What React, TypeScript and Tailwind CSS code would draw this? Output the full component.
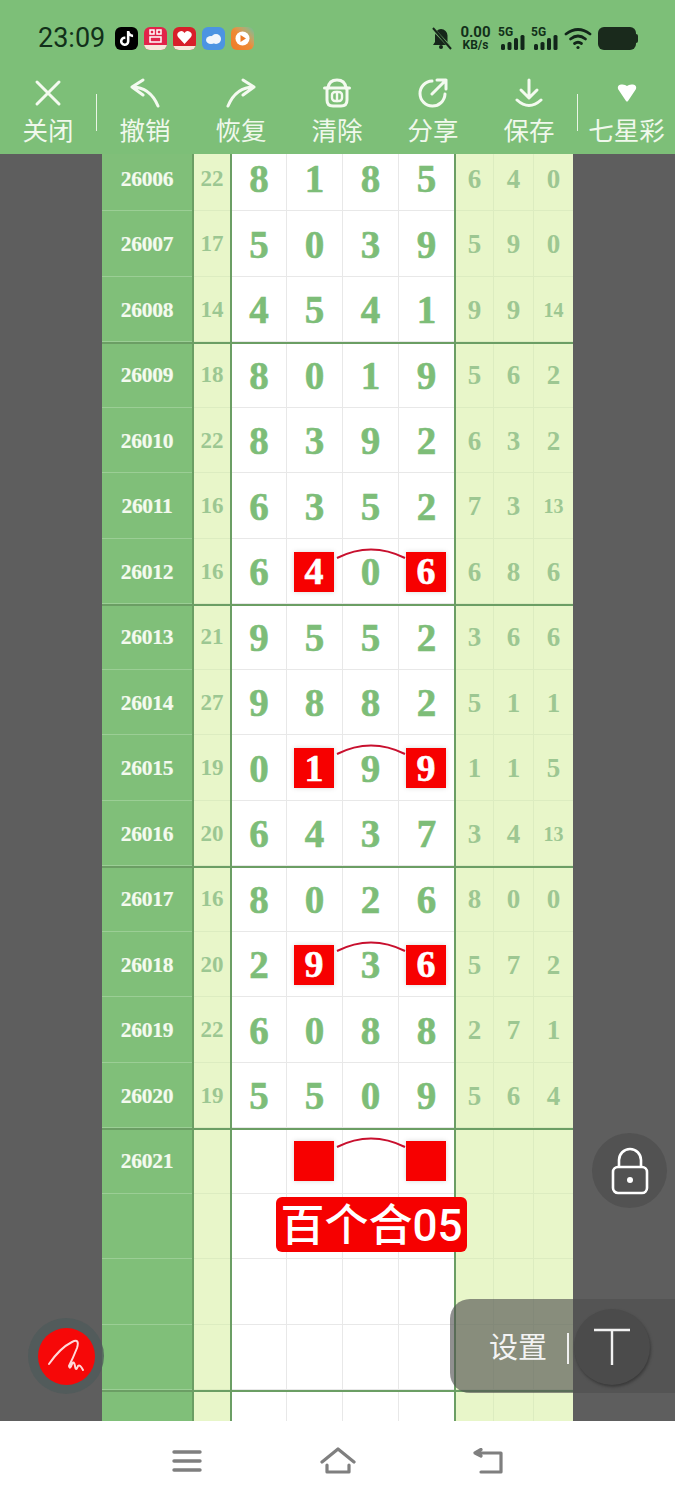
import React from "react";
import { FaTiktok } from "react-icons/fa";

const cjk = "font-['Noto_Sans_CJK_SC','Noto_Sans',sans-serif]";
const serif = "font-['Liberation_Serif',serif]";
const LINE = "bg-[#6b9e64]";

type R = { id: string; sum: string; d: string[]; r: string[]; hl?: boolean };
const mk = (id: string, sum: string, d: string, r: string[], hl?: boolean): R => ({ id, sum, d: d.split(""), r, hl });

const groups: R[][] = [
  [mk("26006", "22", "8185", ["6", "4", "0"]), mk("26007", "17", "5039", ["5", "9", "0"]), mk("26008", "14", "4541", ["9", "9", "14"])],
  [mk("26009", "18", "8019", ["5", "6", "2"]), mk("26010", "22", "8392", ["6", "3", "2"]), mk("26011", "16", "6352", ["7", "3", "13"]), mk("26012", "16", "6406", ["6", "8", "6"], true)],
  [mk("26013", "21", "9552", ["3", "6", "6"]), mk("26014", "27", "9882", ["5", "1", "1"]), mk("26015", "19", "0199", ["1", "1", "5"], true), mk("26016", "20", "6437", ["3", "4", "13"])],
  [mk("26017", "16", "8026", ["8", "0", "0"]), mk("26018", "20", "2936", ["5", "7", "2"], true), mk("26019", "22", "6088", ["2", "7", "1"]), mk("26020", "19", "5509", ["5", "6", "4"])],
  [mk("26021", "", "    ", ["", "", ""], true), mk("", "", "    ", ["", "", ""]), mk("", "", "    ", ["", "", ""]), mk("", "", "    ", ["", "", ""])],
];

function Arc() {
  return (
    <svg className="absolute left-[104px] top-[8px] w-[70px] h-[14px] z-10" viewBox="0 0 70 14" fill="none">
      <path d="M1 11 Q35 -6 69 11" stroke="#c8102e" strokeWidth="2" />
    </svg>
  );
}

function Row({ row, cls }: { row: R; cls: string }) {
  const widths = ["w-[55px]", "w-[56px]", "w-[56px]", "w-[55px]"];
  const rw = ["w-[38px]", "w-[40px]", "w-[39px]"];
  return (
    <div className={`flex ${cls}`}>
      <div className={`w-[90px] pt-[2px] flex items-center justify-center bg-[#80bf79] border-b border-[#9bce95] text-[#f4faef] font-bold text-[21.5px] tracking-[-0.3px] [-webkit-text-stroke:0.2px] ${serif}`}>{row.id}</div>
      <div className={`w-[2px] ${LINE}`} />
      <div className={`w-[36px] pt-[2px] flex items-center justify-center bg-[#e8f6c9] border-b border-[#dcecc0] text-[#9cc792] font-bold text-[23px] ${serif}`}>{row.sum}</div>
      <div className={`w-[2px] ${LINE}`} />
      <div className="relative flex flex-1 bg-white">
        {row.d.map((c, i) => {
          const red = row.hl && (i === 1 || i === 3);
          return (
            <div key={i} className={`${widths[i]} pt-[2px] flex items-center justify-center border-b border-[#e8e8e8] ${i < 3 ? "border-r border-r-[#e8e8e8]" : ""}`}>
              {red ? (
                <div className={`w-[40px] h-[40px] mr-[1px] bg-[#f70000] text-white flex items-center justify-center font-bold text-[38px] shadow-[0_0_5px_#d8d8d8] [-webkit-text-stroke:0.6px] ${serif}`}>{c.trim()}</div>
              ) : (
                <span className={`text-[#7dbd78] font-bold text-[39px] leading-none [-webkit-text-stroke:0.6px] ${serif}`}>{c}</span>
              )}
            </div>
          );
        })}
        {row.hl && <Arc />}
      </div>
      <div className={`w-[2px] ${LINE}`} />
      <div className="flex w-[117px] bg-[#e8f6c9]">
        {row.r.map((c, i) => (
          <div key={i} className={`${rw[i]} pt-[2px] flex items-center justify-center border-b border-[#dcecc0] ${i < 2 ? "border-r border-r-[#dcecc0]" : ""} text-[#9dc792] font-bold ${c.length > 1 ? "text-[20px]" : "text-[27px]"} ${serif}`}>{c}</div>
        ))}
      </div>
    </div>
  );
}

function HeadBtn({ label, w, children }: { label: string; w: string; children: React.ReactNode }) {
  return (
    <div className={`${w} flex flex-col items-center`}>
      <div className="h-[37px] flex items-center justify-center">{children}</div>
      <span className={`text-[25.5px] leading-[36px] text-[#f0f8ec] ${cjk}`}>{label}</span>
    </div>
  );
}

const ic = { fill: "none", stroke: "#f4faf0", strokeWidth: 3, strokeLinecap: "round" as const, strokeLinejoin: "round" as const };

function AppIcon({ bg, children }: { bg: string; children?: React.ReactNode }) {
  return <div className={`w-[23px] h-[23px] rounded-[6px] flex items-center justify-center overflow-hidden ${bg}`}>{children}</div>;
}

function Signal() {
  return (
    <div className="relative w-[26px] h-[23px]">
      <span className="absolute -left-[2px] top-0 text-[12px] font-bold leading-[11px] text-[#12301a] font-['Roboto',sans-serif]">5G</span>
      <svg className="absolute left-0 top-0" width="26" height="23" viewBox="0 0 26 23" fill="#12261a">
        <rect x="1" y="17" width="4" height="6" rx="1.5" />
        <rect x="7.5" y="15" width="4" height="8" rx="1.5" />
        <rect x="14" y="11" width="4" height="12" rx="1.5" />
        <rect x="20.5" y="8" width="4" height="15" rx="1.5" />
      </svg>
    </div>
  );
}

export default function App() {
  return (
    <div className="relative w-[675px] h-[1500px] flex flex-col overflow-hidden bg-[#5e5e5e]">
      {/* header */}
      <div className="h-[154px] bg-[#7dbf78] shrink-0">
        <div className="h-[74px] flex items-center pt-[2px]">
          <span className="ml-[38px] w-[76px] text-[27px] leading-none text-[#12301a] font-['Roboto',sans-serif]">23:09</span>
          <div className="flex gap-[6px] ml-[1px]">
            <AppIcon bg="bg-black"><FaTiktok className="text-white text-[15px]" /></AppIcon>
            <AppIcon bg="bg-[#e2234a]">
              <svg width="23" height="23" viewBox="0 0 23 23" fill="none" stroke="#fff" strokeWidth="1.5"><rect x="6" y="3" width="4" height="4" /><rect x="13" y="3" width="4" height="4" /><rect x="6" y="10" width="11" height="5" /><rect x="0" y="18" width="23" height="5" fill="#f7e8dc" stroke="none" /></svg>
            </AppIcon>
            <AppIcon bg="bg-[#d81f2a]">
              <svg width="23" height="23" viewBox="0 0 23 23" fill="#fff"><path d="M11.5 17 L5 10 a3.6 3.6 0 0 1 6.5 -4 a3.6 3.6 0 0 1 6.5 4z" /><rect x="0" y="19" width="23" height="4" fill="#f7e8dc" /></svg>
            </AppIcon>
            <AppIcon bg="bg-[#4c94e2]">
              <svg width="17" height="13" viewBox="0 0 17 13" fill="#f2f6fb"><ellipse cx="6" cy="8" rx="5" ry="4" /><ellipse cx="11" cy="7" rx="5" ry="5" /></svg>
            </AppIcon>
            <AppIcon bg="bg-linear-to-tr from-[#ee7a25] via-[#ee8a35] to-[#5cc09a]">
              <svg width="17" height="17" viewBox="0 0 17 17"><circle cx="8.5" cy="8.5" r="7" fill="#fff" /><path d="M6.5 5 L12 8.5 L6.5 12z" fill="#ee7a25" /></svg>
            </AppIcon>
          </div>
          <div className="ml-auto mr-[37px] flex items-center">
            <svg width="21" height="23" viewBox="0 0 21 23" fill="#16261a">
              <path d="M10 2 a6.5 6.5 0 0 1 6.5 6.5 V15 L19 18 H2 L4 15 V8.5 A6.5 6.5 0 0 1 10 2z" />
              <circle cx="10" cy="20" r="2" />
              <path d="M1 1 L20 21" stroke="#7dbf78" strokeWidth="3" />
              <path d="M2 1 L20 22" stroke="#16261a" strokeWidth="2" />
            </svg>
            <div className="ml-[8px] w-[31px] flex flex-col items-center text-[#12301a] font-bold font-['Roboto',sans-serif]">
              <span className="text-[15px] leading-[13px]">0.00</span>
              <span className="text-[12px] leading-[12px]">KB/s</span>
            </div>
            <div className="ml-[9px] flex gap-[7px]"><Signal /><Signal /></div>
            <svg className="ml-[5px]" width="28" height="23" viewBox="0 0 28 23" fill="none" stroke="#12261a" strokeWidth="2.8" strokeLinecap="round">
              <path d="M2 7 Q14 -2 26 7" />
              <path d="M6.5 12 Q14 6 21.5 12" />
              <path d="M10.5 16.5 Q14 14 17.5 16.5" />
              <circle cx="14" cy="20.5" r="1.6" fill="#12261a" stroke="none" />
            </svg>
            <div className="ml-[6px] flex items-center">
              <div className="w-[38px] h-[23px] rounded-[6px] bg-[#1a2a1c]" />
              <div className="w-[2px] h-[9px] rounded-r bg-[#1a2a1c]" />
            </div>
          </div>
        </div>
        <div className="flex items-start">
          <HeadBtn label="关闭" w="w-[96px]">
            <svg width="28" height="28" viewBox="0 0 28 28" {...ic}><path d="M3 3 L25 25 M25 3 L3 25" /></svg>
          </HeadBtn>
          <div className="w-px h-[37px] mt-[20px] bg-[#eaf5e6]" />
          <HeadBtn label="撤销" w="w-[96px]">
            <svg width="30" height="30" viewBox="0 0 30 30" {...ic}><path d="M13 2 L2 9 L13 17 M2 9 Q20 9 28 28" /></svg>
          </HeadBtn>
          <HeadBtn label="恢复" w="w-[96px]">
            <svg width="30" height="30" viewBox="0 0 30 30" {...ic}><path d="M17 2 L28 9 L17 17 M28 9 Q10 9 2 28" /></svg>
          </HeadBtn>
          <HeadBtn label="清除" w="w-[96px]">
            <svg width="28" height="30" viewBox="0 0 28 30" {...ic}><path d="M5 10 Q6 2 14 2 Q22 2 23 10" /><path d="M1.5 10 H26.5" /><path d="M4 10 V22 Q4 28 10 28 H18 Q24 28 24 22 V10" /><rect x="9" y="14" width="10" height="9" rx="3" strokeWidth="2.4" /><path d="M14 14 V23" strokeWidth="2.4" /></svg>
          </HeadBtn>
          <HeadBtn label="分享" w="w-[96px]">
            <svg width="30" height="30" viewBox="0 0 30 30" {...ic}><path d="M14 3 A12.5 12.5 0 1 0 27 16" /><path d="M14 16 L28 2 M19 2 H28 V11" /></svg>
          </HeadBtn>
          <HeadBtn label="保存" w="w-[96px]">
            <svg width="28" height="30" viewBox="0 0 28 30" {...ic}><path d="M14 2 V19 M6 12 L14 20 L22 12" /><path d="M2 22 Q14 33 26 22" /></svg>
          </HeadBtn>
          <div className="w-px h-[37px] mt-[20px] bg-[#eaf5e6]" />
          <HeadBtn label="七星彩" w="w-[97px]">
            <svg width="20" height="18" viewBox="0 0 20 18" fill="#ffffff"><path d="M1 5 Q0 1 4 0.5 Q8 0 10 2 Q12 0 16 0.5 Q20 1 19 5 L11 17 Q10 18 9 17z" /></svg>
          </HeadBtn>
        </div>
      </div>

      {/* table */}
      <div className="ml-[102px] w-[471px] flex-1 flex flex-col overflow-hidden">
        {groups.map((g, gi) => (
          <div key={gi} className={`relative flex flex-col shrink-0 ${gi === 0 ? "h-[188px] overflow-hidden" : "h-[262px]"}`}>
            {gi > 0 && <div className={`absolute left-0 right-0 top-0 h-[2px] z-20 ${LINE}`} />}
            {g.map((r, ri) => (
              <Row key={ri} row={r} cls={gi === 0 && ri === 0 ? "h-[65.5px] shrink-0 -mt-[8.5px]" : "h-[65.5px] shrink-0"} />
            ))}
          </div>
        ))}
        <div className="relative flex-1 flex">
          <div className={`absolute left-0 right-0 top-0 h-[2px] z-20 ${LINE}`} />
          <Row row={mk("", "", "    ", ["", "", ""])} cls="h-[65.5px] w-full" />
        </div>
      </div>

      {/* bottom nav */}
      <div className="h-[79px] bg-white shrink-0 flex items-center">
        <svg className="ml-[172px]" width="30" height="24" viewBox="0 0 30 24" stroke="#7f7f7f" strokeWidth="3.4" strokeLinecap="round"><path d="M2 3 H28 M2 12 H28 M2 21 H28" /></svg>
        <svg className="ml-[118px]" width="36" height="28" viewBox="0 0 36 28" fill="none" stroke="#7f7f7f" strokeWidth="3.2" strokeLinecap="round" strokeLinejoin="round"><path d="M2 15 L18 2 L34 15 M7 18 V25 H29 V18" /></svg>
        <svg className="ml-[117px]" width="30" height="26" viewBox="0 0 30 26" fill="none" stroke="#7f7f7f" strokeWidth="3.2" strokeLinecap="round" strokeLinejoin="round"><path d="M8 1.5 L2 5 L8 8 M2 5 H28 V24 H8" /></svg>
      </div>

      {/* floating */}
      <div className="absolute left-[276px] top-[1197px] w-[191px] h-[55px] pt-[3px] z-30 rounded-[6px] bg-[#f60000] text-white flex items-center justify-center text-[44px] font-medium whitespace-nowrap font-['Roboto','Noto_Sans_CJK_SC',sans-serif]">百个合05</div>

      <div className="absolute left-[592px] top-[1133px] w-[75px] h-[75px] rounded-full bg-[#525252] z-30 flex items-center justify-center">
        <svg width="38" height="48" viewBox="0 0 38 48" fill="none" stroke="#fff" strokeWidth="2.6"><path d="M8 21 V13 a11 11 0 0 1 22 0 V21" /><rect x="2" y="20" width="34" height="26" rx="5" /><circle cx="19" cy="33" r="3" fill="#fff" stroke="none" /></svg>
      </div>

      <div className="absolute left-[450px] top-[1299px] w-[225px] h-[94px] rounded-l-[20px] bg-[#4f4f4f]/[.63] z-30 flex items-center">
        <span className={`ml-[39px] text-[29px] text-[#f3f3f3] ${cjk}`}>设置</span>
        <div className="ml-[20px] w-[2px] h-[31px] bg-[#f0f0f0] mt-[4px]" />
        <div className="ml-[5px] w-[76px] h-[76px] rounded-full bg-[#4b4b4b] shadow-[1px_2px_3px_#3a3a3a] flex items-center justify-center mt-[2px]">
          <svg width="38" height="38" viewBox="0 0 38 38" stroke="#f2f2f2" strokeWidth="2.4"><path d="M1 2 H37 M19 2 V37" /></svg>
        </div>
      </div>

      <div className="absolute left-[28px] top-[1318px] w-[76px] h-[76px] rounded-full bg-[#4f5a5a]/80 z-30 flex items-center justify-center">
        <div className="w-[57px] h-[57px] rounded-full bg-[#f60808] flex items-center justify-center">
          <svg width="57" height="57" viewBox="0 0 57 57" fill="none" stroke="#ffd9d9" strokeWidth="2" strokeLinecap="round" strokeLinejoin="round"><path d="M11 36 Q22 20 34 14 Q42 10 39 20 Q35 30 31 38 Q32 42 34 36 Q36 32 37 38 Q38 44 40 38 Q42 36 45 42" /></svg>
        </div>
      </div>
    </div>
  );
}
